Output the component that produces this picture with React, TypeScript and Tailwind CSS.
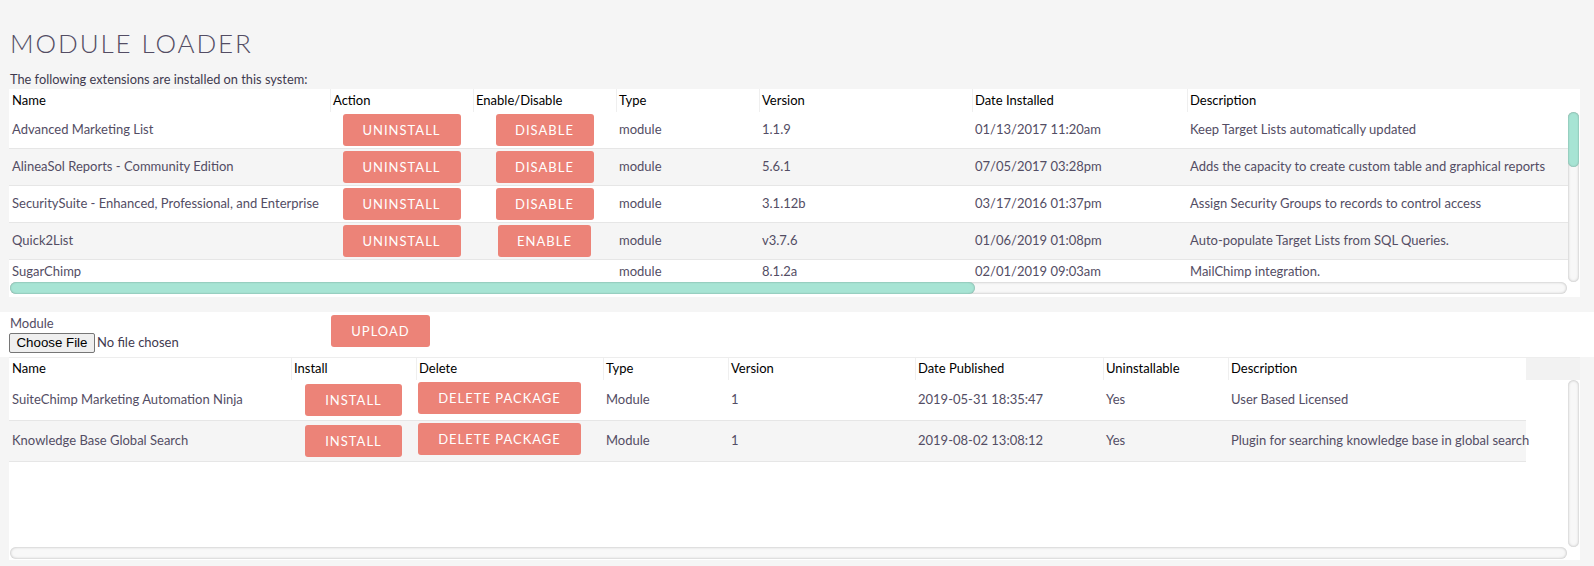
import React from 'react'

type Installed = {
  name: string
  toggle?: 'DISABLE' | 'ENABLE'
  version: string
  date: string
  description: string
}

const INSTALLED: Installed[] = [
  { name: 'Advanced Marketing List', toggle: 'DISABLE', version: '1.1.9', date: '01/13/2017 11:20am', description: 'Keep Target Lists automatically updated' },
  { name: 'AlineaSol Reports - Community Edition', toggle: 'DISABLE', version: '5.6.1', date: '07/05/2017 03:28pm', description: 'Adds the capacity to create custom table and graphical reports' },
  { name: 'SecuritySuite - Enhanced, Professional, and Enterprise', toggle: 'DISABLE', version: '3.1.12b', date: '03/17/2016 01:37pm', description: 'Assign Security Groups to records to control access' },
  { name: 'Quick2List', toggle: 'ENABLE', version: 'v3.7.6', date: '01/06/2019 01:08pm', description: 'Auto-populate Target Lists from SQL Queries.' },
  { name: 'SugarChimp', version: '8.1.2a', date: '02/01/2019 09:03am', description: 'MailChimp integration.' },
]

const PACKAGES = [
  { name: 'SuiteChimp Marketing Automation Ninja', date: '2019-05-31 18:35:47', description: 'User Based Licensed' },
  { name: 'Knowledge Base Global Search', date: '2019-08-02 13:08:12', description: 'Plugin for searching knowledge base in global search' },
]

function Btn({ label, width, className = '' }: { label: string; width: string; className?: string }) {
  return (
    <button
      className={`h-[32px] ${width} ${className} shrink-0 rounded-[3px] bg-[#ec8378] text-[13px] leading-[32px] tracking-[1px] text-white`}
    >
      {label}
    </button>
  )
}

function Head({ label, width, first = false }: { label: string; width: string; first?: boolean }) {
  return (
    <div
      className={`${width} shrink-0 h-full flex items-center text-[13px] text-black bg-white ${
        first ? 'pl-[3px]' : 'pl-[2px] border-l border-[#efefef]'
      }`}
    >
      {label}
    </div>
  )
}

function Cell({ children, width, center = false, pad = 'pl-[3px]' }: { children?: React.ReactNode; width: string; center?: boolean; pad?: string }) {
  return (
    <div className={`${width} shrink-0 flex items-center whitespace-nowrap ${center ? 'justify-center' : pad}`}>
      {children}
    </div>
  )
}

function VScroll({ thumb }: { thumb?: boolean }) {
  return (
    <div className="w-[11px] shrink-0 h-full rounded-full bg-[#f8f8f8] shadow-[inset_0_0_3px_rgba(0,0,0,0.28)] flex flex-col">
      {thumb && <div className="h-[55px] w-full rounded-full bg-[#a7e4d4] shadow-[inset_0_0_2px_rgba(0,0,0,0.35)]" />}
    </div>
  )
}

function HScroll({ thumb }: { thumb?: boolean }) {
  return (
    <div className="ml-[1px] w-[1557px] h-[12px] rounded-full bg-[#f8f8f8] shadow-[inset_0_0_3px_rgba(0,0,0,0.28)] flex">
      {thumb && <div className="w-[965px] h-full rounded-full bg-[#a7e4d4] shadow-[inset_0_0_2px_rgba(0,0,0,0.35)]" />}
    </div>
  )
}

export default function App() {
  return (
    <div className="min-h-screen bg-[#f5f5f5] font-['Lato',sans-serif] text-[#534d64] pb-[6px]">
      <h1 className="pt-[28px] pl-[10px] h-[59px] text-[26px] leading-[31px] font-light tracking-[1.9px] text-[#534d64]">
        MODULE LOADER
      </h1>
      <p className="mt-[11px] pl-[10px] h-[19px] text-[12.8px] leading-[19px] text-[#3f3a4f]">
        The following extensions are installed on this system:
      </p>

      {/* installed extensions */}
      <div className="ml-[9px] w-[1571px] h-[208px] bg-white flex flex-col">
        <div className="h-[23px] flex overflow-hidden">
          <Head first label="Name" width="w-[321px]" />
          <Head label="Action" width="w-[143px]" />
          <Head label="Enable/Disable" width="w-[143px]" />
          <Head label="Type" width="w-[143px]" />
          <Head label="Version" width="w-[213px]" />
          <Head label="Date Installed" width="w-[215px]" />
          <Head label="Description" width="w-[393px]" />
        </div>
        <div className="h-[170px] flex pr-[1px]">
          <div className="flex-1 overflow-hidden">
            {INSTALLED.map((m, i) => (
              <div
                key={m.name}
                className={`flex text-[13px] border-b border-[#e6e6e6] ${m.toggle ? 'h-[37px]' : 'h-[25px]'} ${
                  i % 2 ? 'bg-[#f5f5f5]' : 'bg-white'
                }`}
              >
                <Cell width="w-[321px]">{m.name}</Cell>
                <Cell width="w-[143px]" center>{m.toggle && <Btn label="UNINSTALL" width="w-[118px]" />}</Cell>
                <Cell width="w-[143px]" center>
                  {m.toggle && <Btn label={m.toggle} width={m.toggle === 'ENABLE' ? 'w-[93px]' : 'w-[98px]'} />}
                </Cell>
                <Cell width="w-[143px]">module</Cell>
                <Cell width="w-[213px]">{m.version}</Cell>
                <Cell width="w-[215px]">{m.date}</Cell>
                <Cell width="w-[500px]">{m.description}</Cell>
              </div>
            ))}
          </div>
          <VScroll thumb />
        </div>
        <div className="h-[15px]">
          <HScroll thumb />
        </div>
      </div>

      {/* upload */}
      <div className="mt-[15px] h-[45px] bg-white flex pl-[9px]">
        <div className="w-[322px] pt-[2px]">
          <div className="pl-[1px] h-[19px] text-[13px] leading-[19px]">Module</div>
          <div className="h-[20px] flex items-center">
            <span className="h-[20px] w-[86px] flex items-center justify-center rounded-[2px] border border-[#767676] bg-[#efefef] font-['Liberation_Sans',Arial,sans-serif] text-[13.3px] text-black">
              Choose File
            </span>
            <span className="ml-[2px] text-[13px] text-[#3f3a4f]">No file chosen</span>
          </div>
        </div>
        <Btn label="UPLOAD" width="w-[99px]" className="mt-[3px]" />
      </div>

      {/* packages */}
      <div className="ml-[9px] w-[1571px] h-[203px] bg-white flex flex-col">
        <div className="h-[23px] flex border-t border-[#ededed]">
          <Head first label="Name" width="w-[282px]" />
          <Head label="Install" width="w-[125px]" />
          <Head label="Delete" width="w-[187px]" />
          <Head label="Type" width="w-[125px]" />
          <Head label="Version" width="w-[187px]" />
          <Head label="Date Published" width="w-[188px]" />
          <Head label="Uninstallable" width="w-[125px]" />
          <Head label="Description" width="w-[298px]" />
          <div className="flex-1 bg-[#f2f2f2]" />
        </div>
        <div className="h-[167px] flex pr-[1px]">
          <div className="flex-1 overflow-hidden">
            {PACKAGES.map((p, i) => (
              <div
                key={p.name}
                className={`w-[1517px] h-[41px] flex text-[13px] border-b border-[#e6e6e6] ${i % 2 ? 'bg-[#f5f5f5]' : 'bg-white'}`}
              >
                <Cell width="w-[282px]">{p.name}</Cell>
                <Cell width="w-[125px]" center><Btn label="INSTALL" width="w-[97px]" /></Cell>
                <Cell width="w-[187px]" pad="pl-[2px]"><Btn label="DELETE PACKAGE" width="w-[163px]" className="-mt-[4px]" /></Cell>
                <Cell width="w-[125px]">Module</Cell>
                <Cell width="w-[187px]">1</Cell>
                <Cell width="w-[188px]">{p.date}</Cell>
                <Cell width="w-[125px]">Yes</Cell>
                <Cell width="w-[298px]">{p.description}</Cell>
              </div>
            ))}
          </div>
          <VScroll />
        </div>
        <div className="h-[13px]">
          <HScroll />
        </div>
      </div>
    </div>
  )
}
